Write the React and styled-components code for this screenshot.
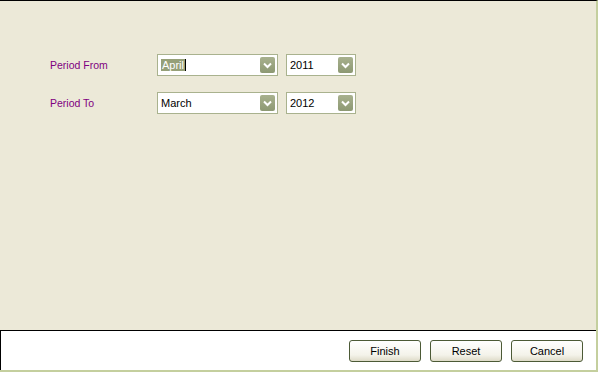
import styled, { createGlobalStyle } from 'styled-components';

const Global = createGlobalStyle`
  html, body {
    margin: 0;
    padding: 0;
    background: #ffffff;
  }
  body {
    font-family: Tahoma, "Liberation Sans", Arial, sans-serif;
  }
`;

const Frame = styled.div`
  width: 598px;
  height: 372px;
  box-sizing: border-box;
  display: flex;
  flex-direction: column;
  border-top: 1px solid #000000;
  border-right: 2px solid #c4cf9e;
  border-bottom: 2px solid #c4cf9e;
`;

const Main = styled.div`
  flex: 1;
  background: #ece9d8;
  padding: 53px 0 0 50px;
  display: flex;
  flex-direction: column;
  gap: 16px;
`;

const Row = styled.div`
  display: flex;
  align-items: center;
  gap: 8px;
`;

const Label = styled.span`
  width: 99px;
  color: #800080;
  font-size: 10.5px;
`;

const Combo = styled.div`
  width: ${({ $width }) => $width}px;
  height: 22px;
  box-sizing: border-box;
  border: 1px solid #a9b28e;
  background: #ffffff;
  display: flex;
  align-items: center;
  justify-content: space-between;
  padding: 0 2px 0 2px;
`;

const Value = styled.span`
  display: flex;
  align-items: center;
  font-size: 11px;
  color: #000000;
  padding-left: 1px;
`;

const Selected = styled.span`
  background: #96a078;
  color: #ffffff;
  padding: 0 1px;
  line-height: 12px;
`;

const Caret = styled.span`
  width: 1px;
  height: 12px;
  background: #000000;
`;

const DropButton = styled.span`
  width: 15px;
  height: 16px;
  border-radius: 2px;
  background: linear-gradient(#a8b18e, #8d9973);
  display: flex;
  align-items: center;
  justify-content: center;
`;

const Footer = styled.div`
  height: 39px;
  background: #ffffff;
  border-top: 1px solid #000000;
  border-left: 1px solid #000000;
  display: flex;
  justify-content: flex-end;
  align-items: center;
  gap: 9px;
  padding-right: 13px;
`;

const Button = styled.button`
  width: 72px;
  height: 22px;
  box-sizing: border-box;
  border: 1px solid #4c5a36;
  border-radius: 3px;
  background: linear-gradient(#ffffff, #f4f3ea 70%, #dedbc8);
  font-family: Tahoma, "Liberation Sans", Arial, sans-serif;
  font-size: 11px;
  color: #000000;
  padding: 0;
`;

function Chevron() {
  return (
    <svg width="9" height="7" viewBox="0 0 9 7">
      <polyline points="1,1.5 4.5,5 8,1.5" fill="none" stroke="#ffffff" strokeWidth="2" />
    </svg>
  );
}

function Select({ width, value, active }) {
  return (
    <Combo $width={width}>
      <Value>
        {active ? (
          <>
            <Selected>{value}</Selected>
            <Caret />
          </>
        ) : (
          value
        )}
      </Value>
      <DropButton>
        <Chevron />
      </DropButton>
    </Combo>
  );
}

export default function App() {
  return (
    <Frame>
      <Global />
      <Main>
        <Row>
          <Label>Period From</Label>
          <Select width={121} value="April" active />
          <Select width={70} value="2011" />
        </Row>
        <Row>
          <Label>Period To</Label>
          <Select width={121} value="March" />
          <Select width={70} value="2012" />
        </Row>
      </Main>
      <Footer>
        <Button>Finish</Button>
        <Button>Reset</Button>
        <Button>Cancel</Button>
      </Footer>
    </Frame>
  );
}
